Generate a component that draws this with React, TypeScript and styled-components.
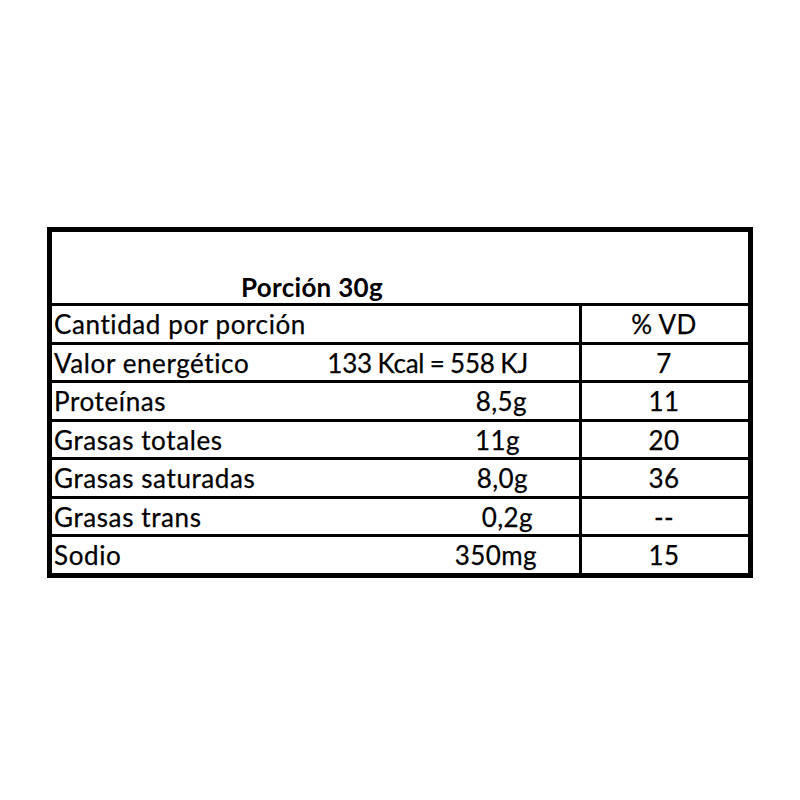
import React from "react";
import styled, { createGlobalStyle } from "styled-components";

const Global = createGlobalStyle`
  html, body { margin: 0; padding: 0; background: #ffffff; }
  body { font-family: "Lato", "Noto Sans", sans-serif; color: #000; }
`;

const Page = styled.div`
  width: 800px;
  height: 800px;
  padding: 227px 0 0 47px;
  box-sizing: border-box;
`;

const Table = styled.div`
  width: 706px;
  box-sizing: border-box;
  border: 5px solid #000;
  display: flex;
  flex-direction: column;
`;

const Header = styled.div`
  height: 71px;
  display: flex;
  align-items: flex-end;
  padding-left: 189px;
  box-sizing: border-box;
`;

const Title = styled.div`
  font-weight: 700;
  font-size: 26px;
  line-height: 30px;
  letter-spacing: 0.3px;
  padding-bottom: 1px;
`;

const Row = styled.div`
  display: grid;
  grid-template-columns: 527px 3px 1fr;
  border-top: 3px solid #000;
  height: 38.5px;
  box-sizing: border-box;
`;

const Left = styled.div`
  display: flex;
  justify-content: space-between;
  align-items: flex-start;
  padding: 3px 0 0 2px;
  font-size: 26px;
  line-height: 30px;
  letter-spacing: 0.4px;
  white-space: nowrap;
  -webkit-text-stroke: 0.25px #000;
`;

const Label = styled.span`
  letter-spacing: 0.6px;
`;

const Value = styled.span<{ $right: number; $tight?: boolean }>`
  padding-right: ${(p) => p.$right}px;
  letter-spacing: ${(p) => (p.$tight ? "-0.2px" : "0.4px")};
  word-spacing: ${(p) => (p.$tight ? "-1px" : "0")};
`;

const Divider = styled.div`
  background: #000;
`;

const Vd = styled.div`
  text-align: center;
  padding-top: 3px;
  font-size: 26px;
  line-height: 30px;
  letter-spacing: 0.4px;
  padding-right: 2px;
  -webkit-text-stroke: 0.25px #000;
`;

const rows: { label: string; value: string; right: number; vd: string; tight?: boolean }[] = [
  { label: "Cantidad por porción", value: "", right: 0, vd: "% VD" },
  { label: "Valor energético", value: "133 Kcal = 558 KJ", right: 51, vd: "7", tight: true },
  { label: "Proteínas", value: "8,5g", right: 52, vd: "11" },
  { label: "Grasas totales", value: "11g", right: 59, vd: "20" },
  { label: "Grasas saturadas", value: "8,0g", right: 51, vd: "36" },
  { label: "Grasas trans", value: "0,2g", right: 46, vd: "--" },
  { label: "Sodio", value: "350mg", right: 42, vd: "15" },
];

export default function App() {
  return (
    <>
      <Global />
      <Page>
        <Table>
          <Header>
            <Title>Porción 30g</Title>
          </Header>
          {rows.map((r) => (
            <Row key={r.label}>
              <Left>
                <Label>{r.label}</Label>
                <Value $right={r.right} $tight={r.tight}>
                  {r.value}
                </Value>
              </Left>
              <Divider />
              <Vd>{r.vd}</Vd>
            </Row>
          ))}
        </Table>
      </Page>
    </>
  );
}
